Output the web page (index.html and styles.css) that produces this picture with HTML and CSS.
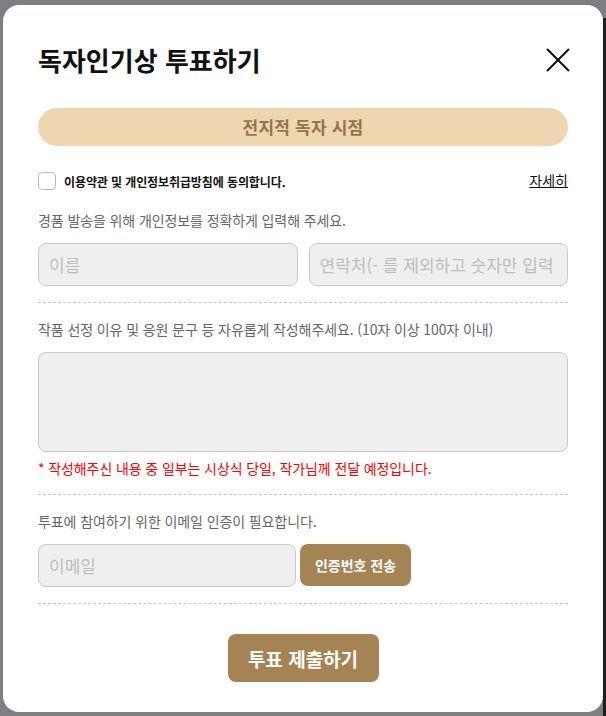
FILE: index.html
```html
<!DOCTYPE html>
<html lang="ko">
<head>
    <meta charset="UTF-8">
    <meta name="viewport" content="width=device-width, initial-scale=1.0">
    <title>독자인기상 투표하기</title>
    <link rel="stylesheet" href="styles.css">
</head>
<body>
    <div class="vote-modal">
        <div class="modal-header">
            <h1 class="modal-title">독자인기상 투표하기</h1>
            <button class="close-btn" type="button" aria-label="닫기">
                <svg width="24" height="24" viewBox="0 0 24 24">
                    <path d="M1 1 L23 23 M23 1 L1 23" stroke="#111" stroke-width="2" fill="none"/>
                </svg>
            </button>
        </div>

        <div class="work-pill">전지적 독자 시점</div>

        <div class="agree-row">
            <label class="agree-label">
                <span class="checkbox"></span>
                이용약관 및 개인정보취급방침에 동의합니다.
            </label>
            <a href="#" class="more-link">자세히</a>
        </div>

        <p class="guide-text guide-first">경품 발송을 위해 개인정보를 정확하게 입력해 주세요.</p>
        <div class="input-grid">
            <input class="field" type="text" placeholder="이름">
            <input class="field" type="text" placeholder="연락처(- 를 제외하고 숫자만 입력">
        </div>

        <div class="divider"></div>

        <p class="guide-text">작품 선정 이유 및 응원 문구 등 자유롭게 작성해주세요. (10자 이상 100자 이내)</p>
        <textarea class="field memo"></textarea>
        <p class="warn-text">* 작성해주신 내용 중 일부는 시상식 당일, 작가님께 전달 예정입니다.</p>

        <div class="divider"></div>

        <p class="guide-text">투표에 참여하기 위한 이메일 인증이 필요합니다.</p>
        <div class="email-row">
            <input class="field email" type="text" placeholder="이메일">
            <button class="btn-brown btn-code" type="button">인증번호 전송</button>
        </div>

        <div class="divider"></div>

        <div class="submit-wrap">
            <button class="btn-brown btn-submit" type="button">투표 제출하기</button>
        </div>
    </div>
</body>
</html>
```

FILE: styles.css
```css
* {
    margin: 0;
    padding: 0;
    box-sizing: border-box;
}

html, body {
    height: 100%;
}

body {
    font-family: "Noto Sans CJK KR", "Noto Sans", sans-serif;
    /* dark strip of the page behind the overlay, on the right edge */
    background: linear-gradient(#1e1c1c, #1e1c1c) right 0 top 18px / 3px 100% no-repeat, #7d7f82;
    color: #111;
    overflow: hidden;
}

.vote-modal {
    width: 600px;
    height: 707px;
    margin: 5px 0 0 3px;
    padding: 35px 35px 30px;
    background: #fff;
    border-radius: 16px;
}

.modal-header {
    display: flex;
    align-items: center;
    justify-content: space-between;
    height: 40px;
}

.modal-title {
    font-size: 26px;
    font-weight: 700;
    line-height: 40px;
    color: #111;
}

.close-btn {
    background: none;
    border: none;
    width: 24px;
    height: 24px;
    margin-right: -2px;
    display: flex;
}

.work-pill {
    margin-top: 28px;
    height: 38px;
    border-radius: 19px;
    background: #eed6b1;
    color: #937546;
    font-size: 17px;
    font-weight: 700;
    line-height: 38px;
    letter-spacing: 0.2px;
    text-align: center;
}

.agree-row {
    margin-top: 26px;
    display: flex;
    align-items: center;
    justify-content: space-between;
    height: 18px;
}

.agree-label {
    display: flex;
    align-items: center;
    gap: 8px;
    font-size: 12px;
    font-weight: 700;
    color: #111;
    letter-spacing: -0.1px;
}

.checkbox {
    width: 18px;
    height: 18px;
    border: 1px solid #bbb;
    border-radius: 4px;
    background: #fff;
}

.more-link {
    font-size: 14px;
    color: #111;
    text-decoration: underline;
    margin-top: -3px;
}

.guide-text {
    font-size: 14px;
    line-height: 20px;
    color: #666;
    letter-spacing: -0.1px;
}

.guide-first {
    margin-top: 20px;
}

.field {
    display: block;
    font-family: inherit;
    font-size: 17px;
    color: #333;
    background: #efefef;
    border: 1px solid #c8c8c8;
    border-radius: 8px;
    padding: 0 10px;
    height: 43px;
    outline: none;
    min-width: 0;
}

.field::placeholder {
    color: #bdbdbd;
}

.input-grid {
    margin-top: 13px;
    display: grid;
    grid-template-columns: 1fr 1fr;
    gap: 11px;
}

.divider {
    margin: 16px 0;
    border-top: 1px dashed #c8c8c8;
}

.memo {
    margin-top: 13px;
    width: 100%;
    height: 100px;
    resize: none;
}

.warn-text {
    margin-top: 6px;
    font-size: 14px;
    line-height: 20px;
    color: #ff0000;
    letter-spacing: -0.1px;
}

.email-row {
    margin-top: 13px;
    display: flex;
    gap: 4px;
}

.email {
    width: 258px;
}

.btn-brown {
    border: none;
    background: #a58352;
    color: #fff;
    font-family: inherit;
    font-weight: 700;
    border-radius: 8px;
}

.btn-code {
    width: 111px;
    height: 42px;
    font-size: 14px;
}

.submit-wrap {
    display: flex;
    justify-content: center;
    margin-top: 30px;
}

.btn-submit {
    width: 151px;
    height: 48px;
    font-size: 19px;
}
```
